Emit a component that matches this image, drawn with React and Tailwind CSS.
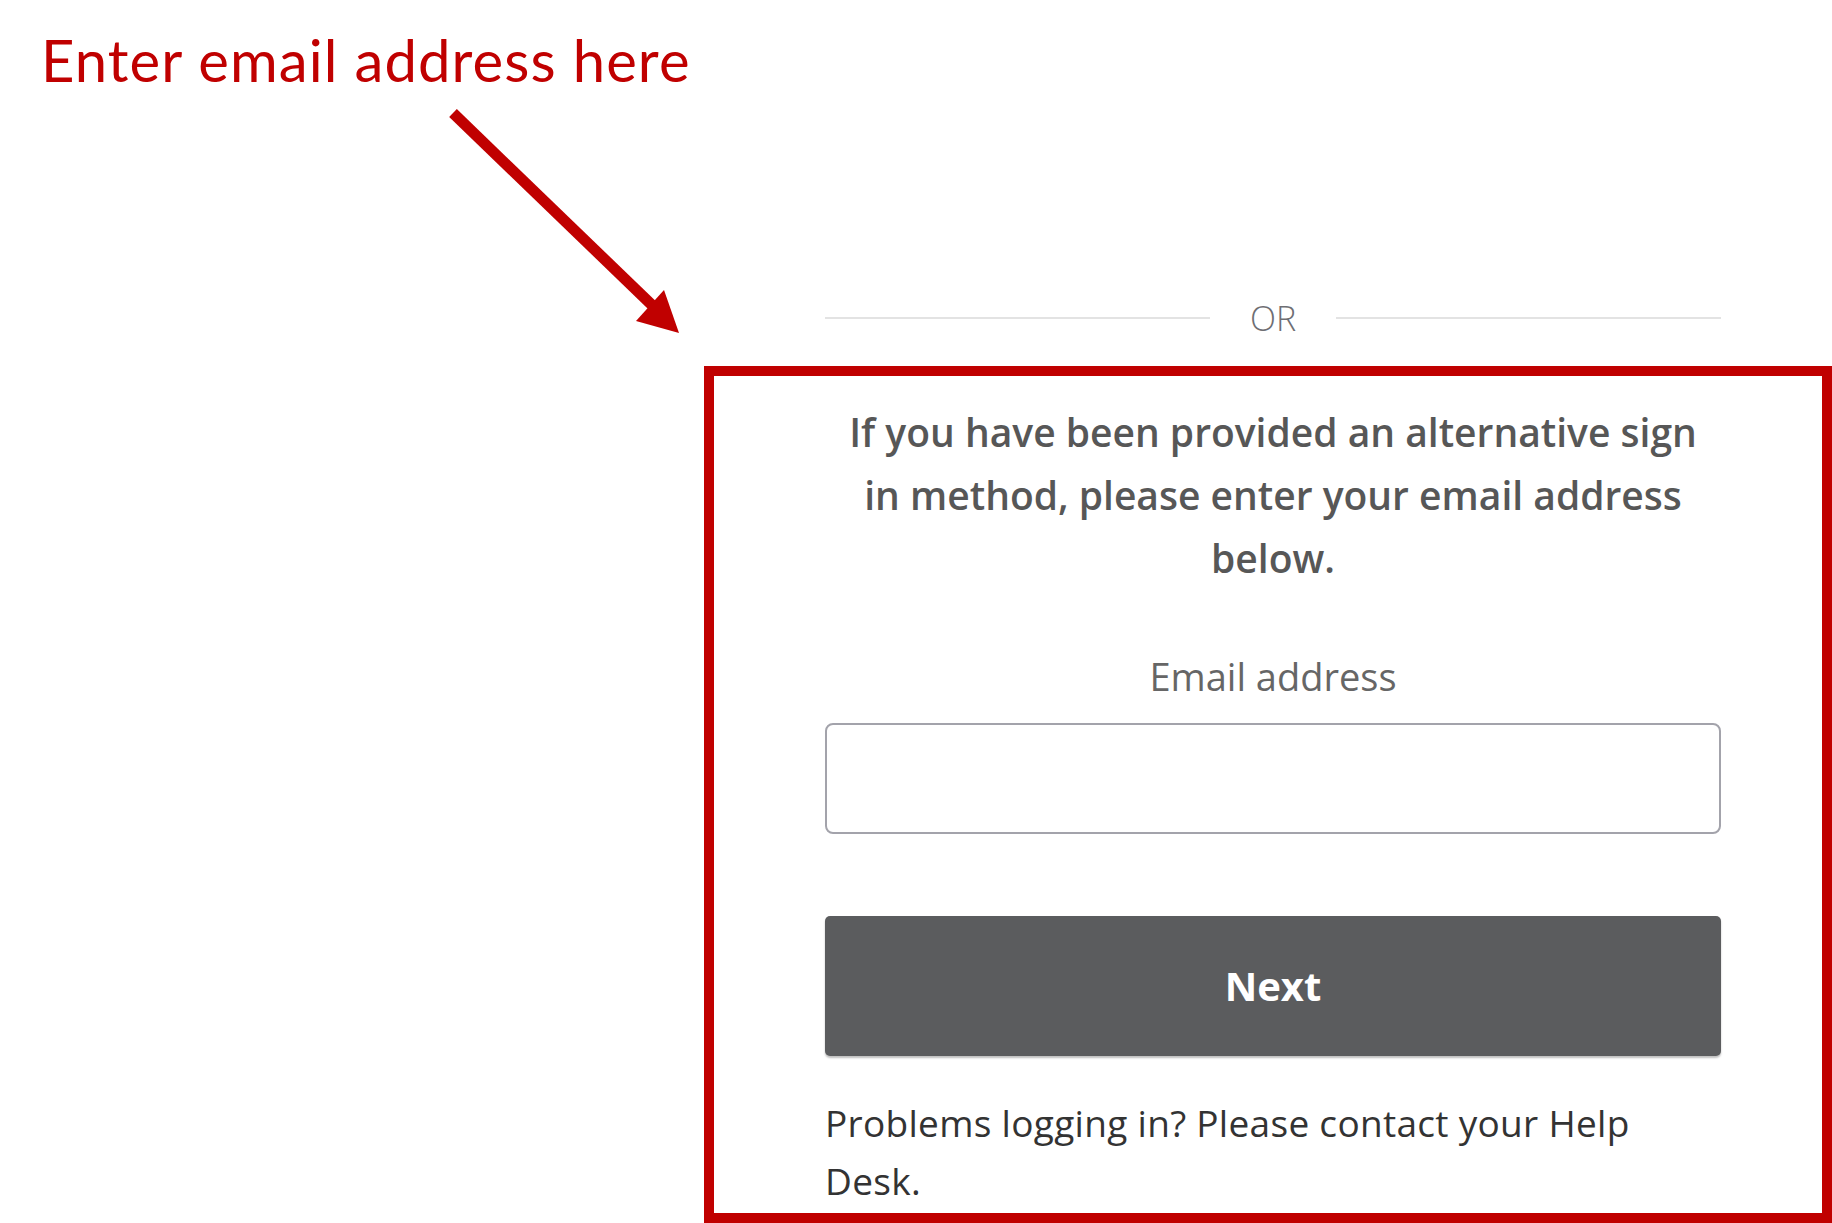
import React from 'react';

// annotation arrow that points at the sign-in box
const Arrow = () => (
  <svg
    className="absolute left-0 top-0 pointer-events-none"
    width="1832"
    height="400"
    viewBox="0 0 1832 400"
  >
    <line x1="453" y1="113" x2="655" y2="308" stroke="#c00000" strokeWidth="11" />
    <polygon points="679,333 664,290 636,321" fill="#c00000" />
  </svg>
);

const App = () => {
  return (
    <div className="relative flex flex-col w-[1832px] h-[1223px] bg-white overflow-hidden font-['Open_Sans',sans-serif]">
      {/* Annotation header */}
      <div className="h-[298px] pt-[31px] pl-[41px] font-['Lato',sans-serif]">
        <h1 className="text-[58px] leading-none tracking-[1.1px] text-[#c00000] font-normal">
          Enter email address here
        </h1>
      </div>
      <Arrow />

      {/* OR divider */}
      <div className="ml-[825px] w-[896px] h-[40px] flex items-center">
        <div className="flex-1 h-[2px] bg-[#e3e3e3]" />
        <span className="px-[40px] text-[34px] leading-none font-light text-[#6e6e73]">OR</span>
        <div className="flex-1 h-[2px] bg-[#e3e3e3]" />
      </div>

      {/* Highlighted form */}
      <div className="mt-[28px] ml-[704px] flex-1 border-[10px] border-[#c00000] pl-[111px] pt-[24px]">
        <div className="w-[896px] flex flex-col">
          <p className="text-center text-[39px] leading-[63px] font-semibold text-[#575757]">
            If you have been provided an alternative sign
            <br />
            in method, please enter your email address
            <br />
            below.
          </p>

          <label className="mt-[63px] text-center text-[38px] leading-[48px] text-[#666666]">
            Email address
          </label>
          <input
            type="email"
            className="mt-[23px] w-full h-[111px] border-2 border-[#a3a3ab] rounded-[8px] bg-white outline-none"
          />

          <button className="mt-[82px] w-full h-[140px] rounded-[5px] bg-[#5b5c5e] text-white text-[40px] font-bold shadow-[0_2px_2px_rgba(0,0,0,0.25)]">
            Next
          </button>

          <p className="mt-[38px] text-[37px] leading-[58px] tracking-[0.3px] text-[#333333]">
            Problems logging in? Please contact your Help
            <br />
            Desk.
          </p>
        </div>
      </div>
    </div>
  );
};

export default App;
